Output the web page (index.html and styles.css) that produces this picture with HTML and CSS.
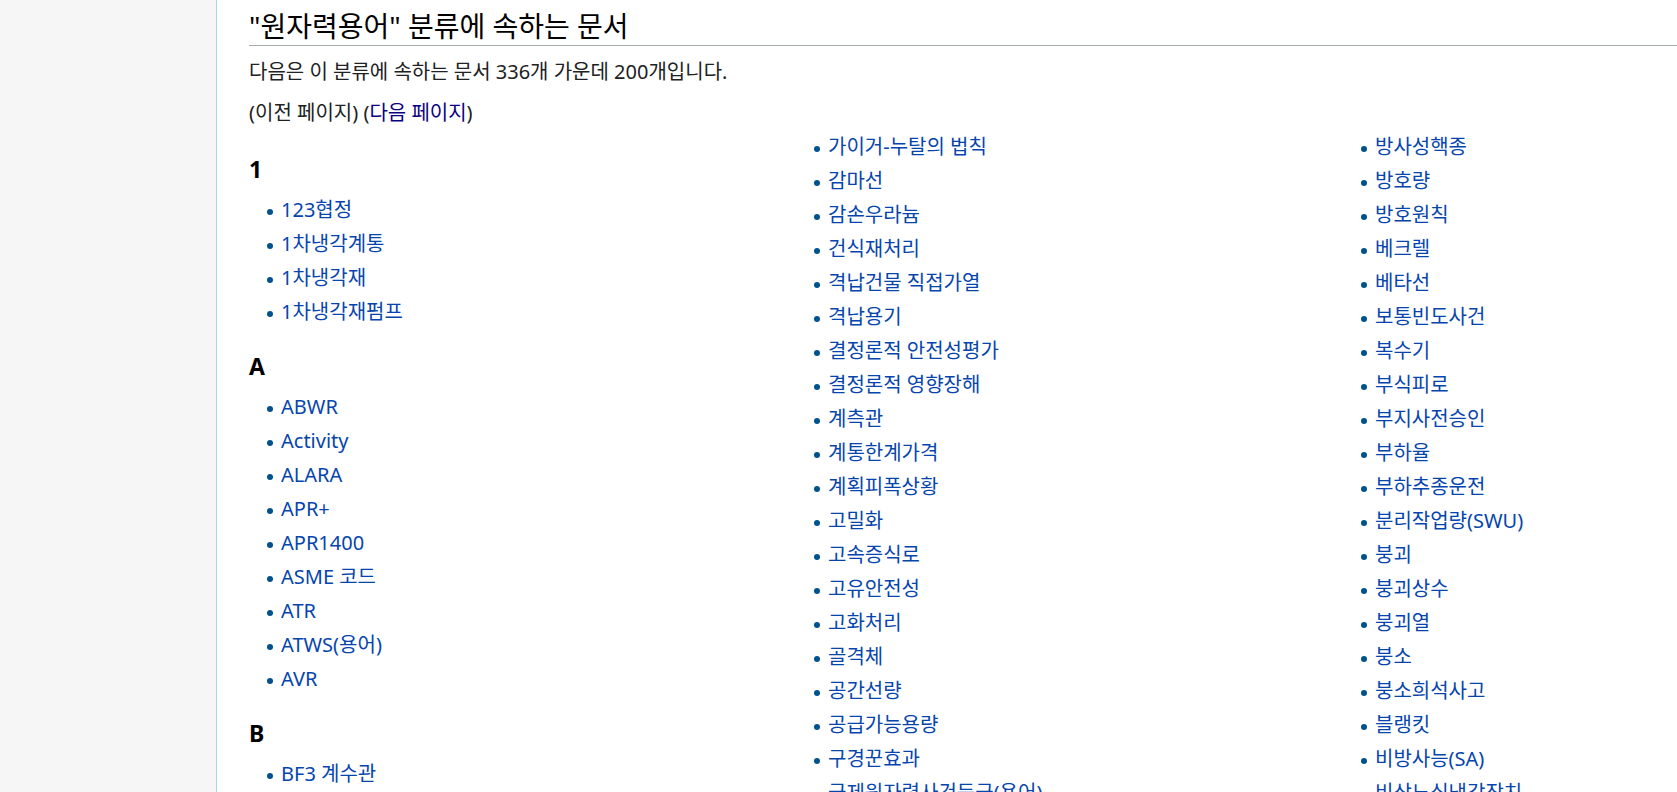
FILE: index.html
```html
<!DOCTYPE html>
<html lang="ko">
<head>
<meta charset="utf-8">
<title>분류:원자력용어</title>
<link rel="stylesheet" href="styles.css">
</head>
<body>
<div class="page">
  <div class="sidebar"></div>
  <main class="content">
    <h1 class="title">"원자력용어" 분류에 속하는 문서</h1>
    <p class="intro">다음은 이 분류에 속하는 문서 336개 가운데 200개입니다.</p>
    <p class="pager">(이전 페이지) (<a class="visited" href="#">다음 페이지</a>)</p>
    <div class="category">
      <div class="col">
        <div class="group first">
          <h3>1</h3>
          <ul>
            <li><a href="#">123협정</a></li>
            <li><a href="#">1차냉각계통</a></li>
            <li><a href="#">1차냉각재</a></li>
            <li><a href="#">1차냉각재펌프</a></li>
          </ul>
        </div>
        <div class="group">
          <h3>A</h3>
          <ul>
            <li><a href="#">ABWR</a></li>
            <li><a href="#">Activity</a></li>
            <li><a href="#">ALARA</a></li>
            <li><a href="#">APR+</a></li>
            <li><a href="#">APR1400</a></li>
            <li><a href="#">ASME 코드</a></li>
            <li><a href="#">ATR</a></li>
            <li><a href="#">ATWS(용어)</a></li>
            <li><a href="#">AVR</a></li>
          </ul>
        </div>
        <div class="group">
          <h3>B</h3>
          <ul>
            <li><a href="#">BF3 계수관</a></li>
          </ul>
        </div>
      </div>
      <div class="col">
        <ul>
          <li><a href="#">가이거-누탈의 법칙</a></li>
          <li><a href="#">감마선</a></li>
          <li><a href="#">감손우라늄</a></li>
          <li><a href="#">건식재처리</a></li>
          <li><a href="#">격납건물 직접가열</a></li>
          <li><a href="#">격납용기</a></li>
          <li><a href="#">결정론적 안전성평가</a></li>
          <li><a href="#">결정론적 영향장해</a></li>
          <li><a href="#">계측관</a></li>
          <li><a href="#">계통한계가격</a></li>
          <li><a href="#">계획피폭상황</a></li>
          <li><a href="#">고밀화</a></li>
          <li><a href="#">고속증식로</a></li>
          <li><a href="#">고유안전성</a></li>
          <li><a href="#">고화처리</a></li>
          <li><a href="#">골격체</a></li>
          <li><a href="#">공간선량</a></li>
          <li><a href="#">공급가능용량</a></li>
          <li><a href="#">구경꾼효과</a></li>
          <li><a href="#">국제원자력사건등급(용어)</a></li>
        </ul>
      </div>
      <div class="col">
        <ul>
          <li><a href="#">방사성핵종</a></li>
          <li><a href="#">방호량</a></li>
          <li><a href="#">방호원칙</a></li>
          <li><a href="#">베크렐</a></li>
          <li><a href="#">베타선</a></li>
          <li><a href="#">보통빈도사건</a></li>
          <li><a href="#">복수기</a></li>
          <li><a href="#">부식피로</a></li>
          <li><a href="#">부지사전승인</a></li>
          <li><a href="#">부하율</a></li>
          <li><a href="#">부하추종운전</a></li>
          <li><a href="#">분리작업량(SWU)</a></li>
          <li><a href="#">붕괴</a></li>
          <li><a href="#">붕괴상수</a></li>
          <li><a href="#">붕괴열</a></li>
          <li><a href="#">붕소</a></li>
          <li><a href="#">붕소희석사고</a></li>
          <li><a href="#">블랭킷</a></li>
          <li><a href="#">비방사능(SA)</a></li>
          <li><a href="#">비상노심냉각장치</a></li>
        </ul>
      </div>
    </div>
  </main>
</div>
</body>
</html>
```
FILE: styles.css
```css
html, body {
  margin: 0;
  padding: 0;
  height: 100%;
  overflow: hidden;
  background: #ffffff;
}

body {
  font-family: "Noto Sans", "Noto Sans CJK KR", sans-serif;
  color: #202122;
}

.page {
  display: flex;
  min-height: 792px;
}

.sidebar {
  flex: none;
  width: 216px;
  background: #f6f6f6;
  border-right: 1px solid #a7d7f9;
}

.content {
  flex: 1;
  min-width: 0;
  padding-left: 32px;
  overflow: hidden;
}

.title {
  margin: 8px 0 0;
  font-size: 28px;
  font-weight: normal;
  line-height: 37px;
  color: #000000;
  border-bottom: 1px solid #a2a9b1;
  white-space: nowrap;
}

.intro,
.pager {
  font-size: 20px;
  line-height: 28px;
  margin: 0;
}

.intro {
  margin-top: 12px;
}

.pager {
  margin-top: 13px;
}

a {
  color: #0645ad;
  text-decoration: none;
}

a.visited {
  color: #0b0080;
}

.category {
  display: grid;
  grid-template-columns: repeat(3, 547px);
  margin-top: 3px;
}

.col {
  min-width: 0;
}

.group h3 {
  margin: 20px 0 6px;
  font-size: 23px;
  font-weight: bold;
  line-height: 35px;
  color: #000000;
}

.group.first h3 {
  margin-top: 22px;
}

ul {
  list-style: none;
  margin: 0;
  padding: 0;
}

li {
  display: flex;
  align-items: center;
  font-size: 20px;
  line-height: 34px;
  white-space: nowrap;
}

li::before {
  content: "";
  flex: none;
  width: 6px;
  height: 6px;
  border-radius: 50%;
  background: #00528c;
  margin-left: 18px;
  margin-right: 8px;
  transform: translateY(2px);
}
```
